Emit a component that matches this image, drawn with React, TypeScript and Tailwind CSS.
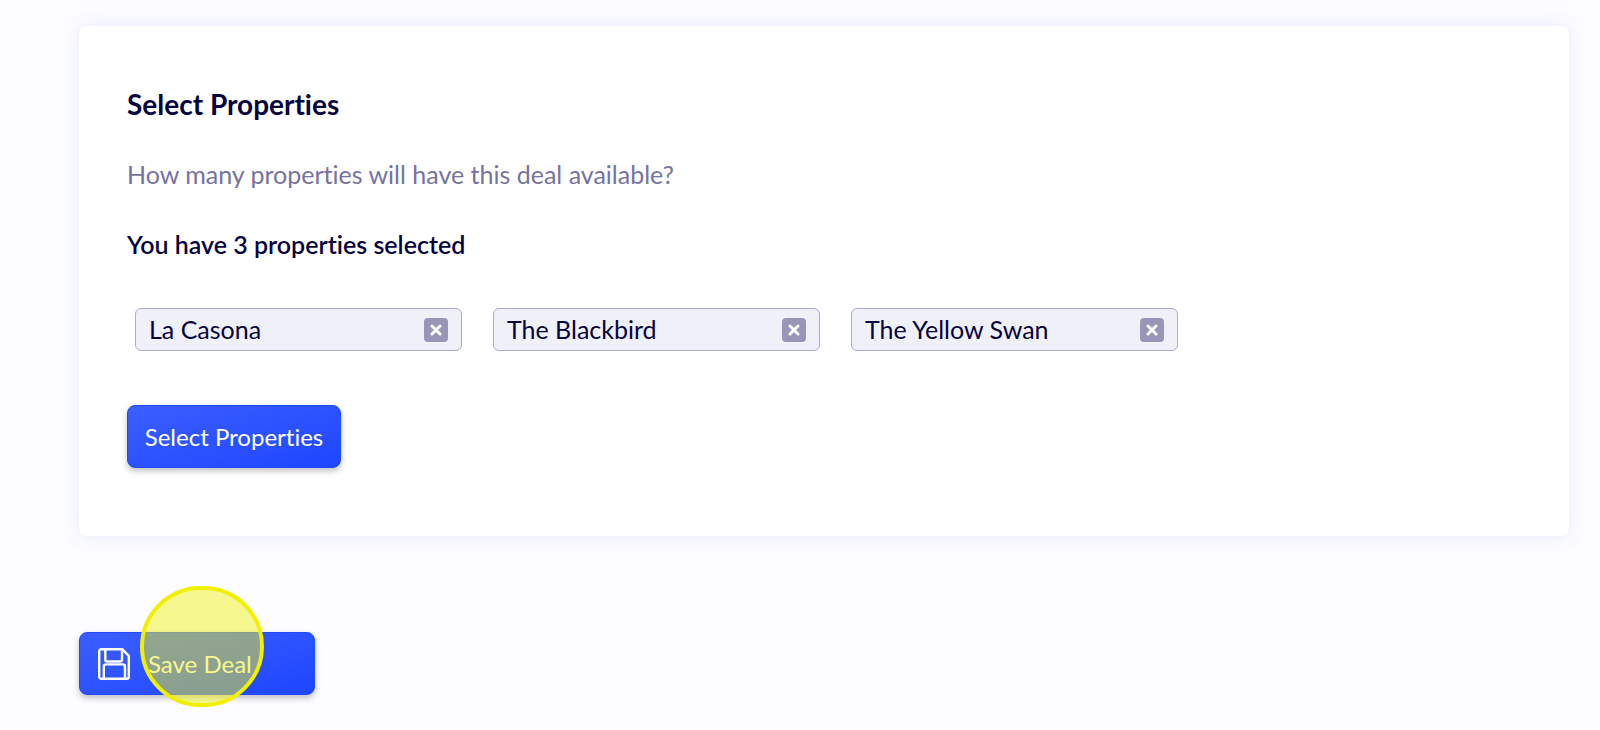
import React, { useState } from 'react';

const PROPERTIES = ['La Casona', 'The Blackbird', 'The Yellow Swan'];

interface PropertyTagProps {
  name: string;
  onRemove: () => void;
}

const PropertyTag: React.FC<PropertyTagProps> = ({ name, onRemove }) => (
  <li className="flex h-[43px] w-[327px] items-center justify-between rounded-md border border-[#aaa8d8] bg-[#f0f0f9] px-[13px]">
    <span className="pb-0.5 text-[25px] leading-7 text-[#06033d]">{name}</span>
    <button
      type="button"
      onClick={onRemove}
      aria-label={`Remove ${name}`}
      className="flex h-6 w-6 items-center justify-center rounded bg-[#9896b8]"
    >
      <svg className="h-6 w-6" viewBox="0 0 24 24" fill="none" stroke="#fff" strokeWidth="3" strokeLinecap="round">
        <path d="M8 8l8 8M16 8l-8 8" />
      </svg>
    </button>
  </li>
);

const SaveIcon: React.FC = () => (
  <svg className="h-8 w-8" viewBox="0 0 32 32" fill="none" stroke="#fff" strokeWidth="2.400" strokeLinejoin="round">
    <path d="M3.200 1.200h21l6.600 6.600v21a2 2 0 0 1-2 2H3.200a2 2 0 0 1-2-2V3.200a2 2 0 0 1 2-2z" />
    <path d="M7.300 1.200v10.300a2 2 0 0 0 2 2h12.700a2 2 0 0 0 2-2V1.200" />
    <path d="M5.800 30.800V18.400a2 2 0 0 1 2-2h17.200a2 2 0 0 1 2 2v12.400" />
  </svg>
);

const App: React.FC = () => {
  const [selected, setSelected] = useState<string[]>(PROPERTIES);

  const removeProperty = (name: string) => {
    setSelected(selected.filter((item) => item !== name));
  };

  return (
    <main className="flex min-h-screen flex-col bg-[#fdfdff] pb-8 pl-[79px] pr-[31px] font-['Lato',sans-serif] text-[#06033d] [font-variant-ligatures:none]">
      {/* lower edge of the previous panel */}
      <div className="mb-[26px] shadow-[0_0_8px_1px_rgba(80,80,255,0.04)]" />

      <section className="rounded-lg bg-white px-12 pb-[68px] pt-16 shadow-[0_0_18px_2px_rgba(80,90,255,0.10)]">
        <h2 className="text-[28px] font-bold leading-7">Select Properties</h2>
        <p className="mt-[42px] text-[25px] leading-7 text-[#7673a1]">
          How many properties will have this deal available?
        </p>
        <p className="mt-[42px] text-[25px] font-semibold leading-7">
          You have {selected.length} properties selected
        </p>

        <ul className="mt-[50px] flex flex-wrap gap-[31px] pl-2">
          {selected.map((name) => (
            <PropertyTag key={name} name={name} onRemove={() => removeProperty(name)} />
          ))}
        </ul>

        <button
          type="button"
          className="mt-[54px] flex h-[63px] w-[214px] items-center justify-center rounded-lg border border-[#1f48ff] bg-linear-to-br from-[#3a5eff] to-[#1f45ff] text-2xl text-white shadow-[0_3px_6px_rgba(0,0,0,0.25)]"
        >
          Select Properties
        </button>
      </section>

      <div className="relative mt-24 w-[236px]">
        <button
          type="button"
          className="flex h-[63px] w-full items-center gap-[18px] rounded-lg border border-[#1f48ff] bg-linear-to-br from-[#3a5eff] to-[#1f45ff] pl-[18px] text-2xl text-white shadow-[0_3px_6px_rgba(0,0,0,0.25)]"
        >
          <SaveIcon />
          Save Deal
        </button>
        {/* click highlight */}
        <span className="pointer-events-none absolute -top-[46px] left-[61px] h-[121px] w-[124px] rounded-full border-4 border-[#f0f000] bg-[#f0f220]/50" />
      </div>
    </main>
  );
};

export default App;
